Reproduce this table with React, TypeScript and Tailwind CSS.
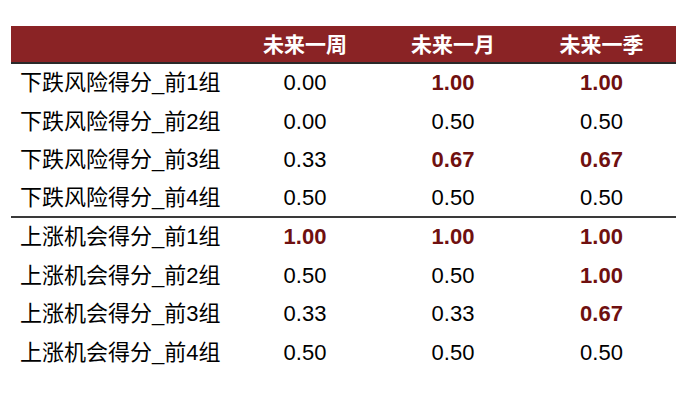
const rows: { label: string; vals: [string, boolean][] }[] = [
  { label: '下跌风险得分_前1组', vals: [['0.00', false], ['1.00', true], ['1.00', true]] },
  { label: '下跌风险得分_前2组', vals: [['0.00', false], ['0.50', false], ['0.50', false]] },
  { label: '下跌风险得分_前3组', vals: [['0.33', false], ['0.67', true], ['0.67', true]] },
  { label: '下跌风险得分_前4组', vals: [['0.50', false], ['0.50', false], ['0.50', false]] },
  { label: '上涨机会得分_前1组', vals: [['1.00', true], ['1.00', true], ['1.00', true]] },
  { label: '上涨机会得分_前2组', vals: [['0.50', false], ['0.50', false], ['1.00', true]] },
  { label: '上涨机会得分_前3组', vals: [['0.33', false], ['0.33', false], ['0.67', true]] },
  { label: '上涨机会得分_前4组', vals: [['0.50', false], ['0.50', false], ['0.50', false]] },
];

const heads = ['未来一周', '未来一月', '未来一季'];

export default function App() {
  return (
    <div
      className="w-[700px] h-[409px] bg-white pt-[26px] pl-[11px]"
      style={{ fontFamily: '"Liberation Sans", "Noto Sans CJK SC", sans-serif' }}
    >
      <div className="w-[665px]">
        <div className="grid grid-cols-[220px_148px_148px_149px] h-[38px] bg-[#8a2325] border-b-2 border-[#2a2a2a] items-center">
          <div />
          {heads.map((h) => (
            <div key={h} className="text-center text-white font-bold text-[21px] leading-none">
              {h}
            </div>
          ))}
        </div>
        {rows.map((r, i) => (
          <div
            key={r.label}
            className={`grid grid-cols-[220px_148px_148px_149px] h-[38.5px] items-center ${
              i === 3 ? 'border-b-2 border-[#3a3a3a]' : ''
            }`}
          >
            <div className="pl-[9px] text-[22px] leading-none text-black">{r.label}</div>
            {r.vals.map(([v, b], j) => (
              <div
                key={j}
                className={`text-center text-[22px] leading-none ${
                  b ? 'font-bold text-[#6f1010]' : 'text-black'
                }`}
              >
                {v}
              </div>
            ))}
          </div>
        ))}
      </div>
    </div>
  );
}
